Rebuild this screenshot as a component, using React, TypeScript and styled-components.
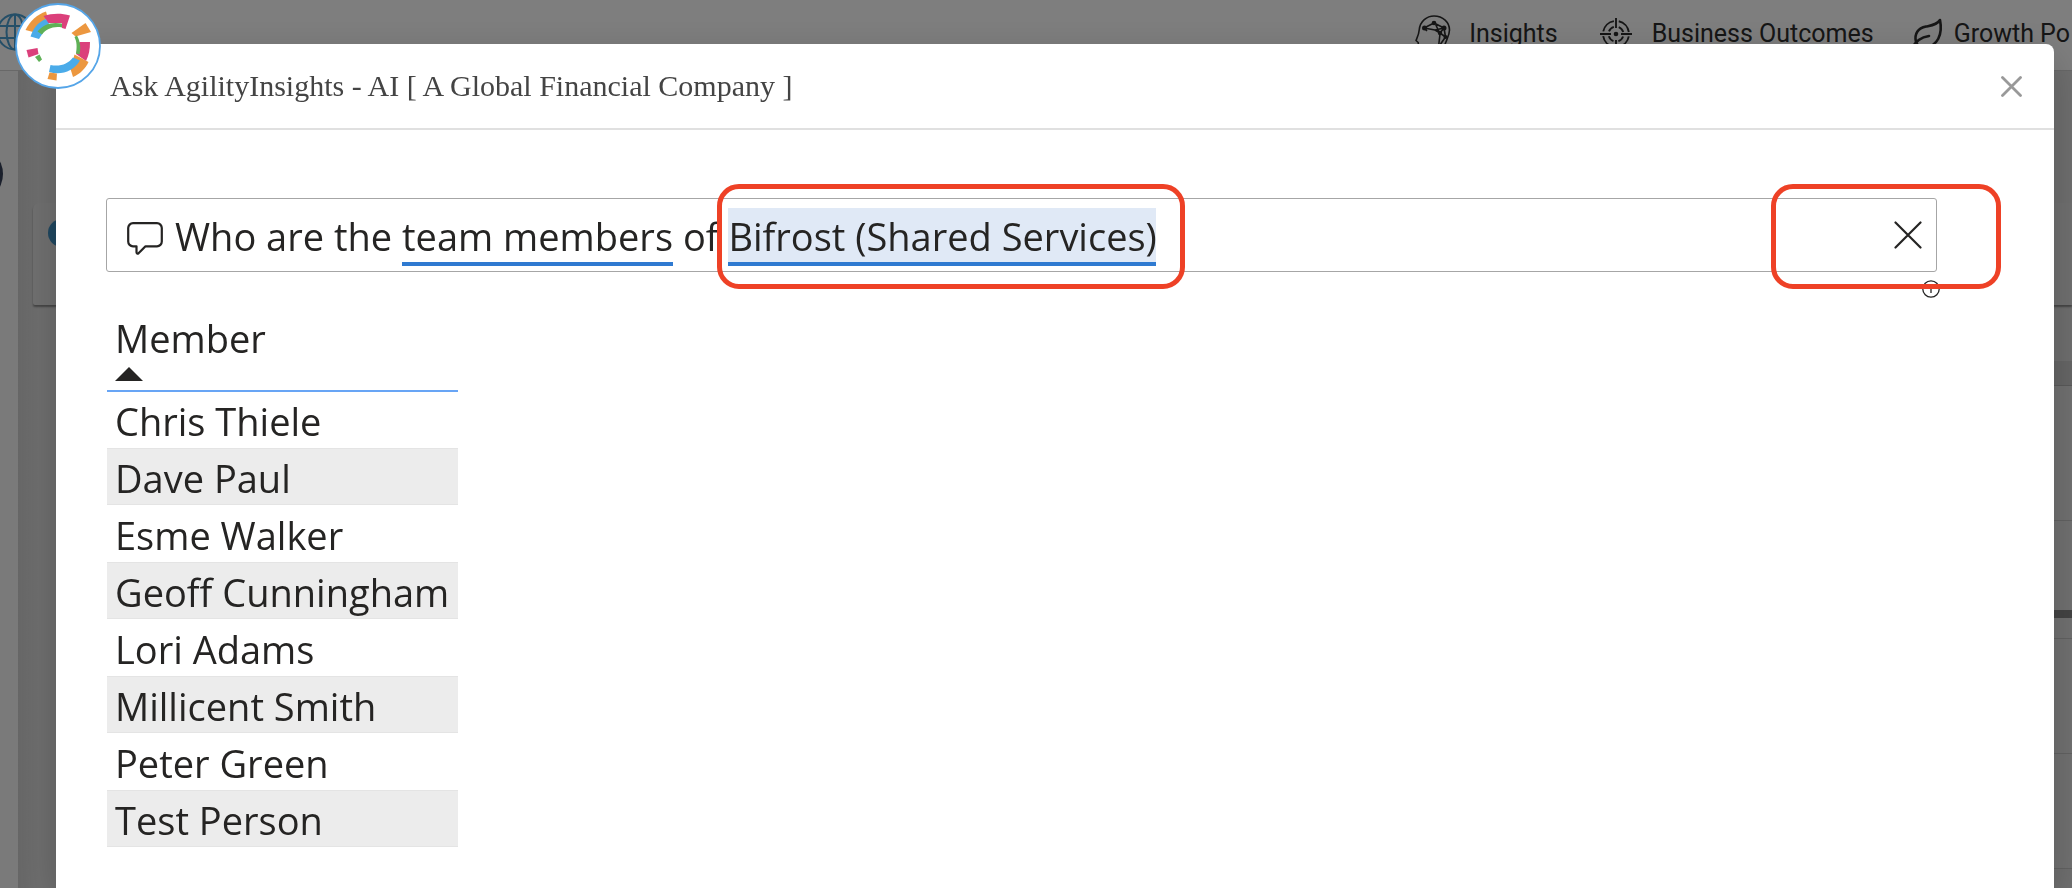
import React, { useLayoutEffect, useRef, useState } from "react";
import styled, { createGlobalStyle } from "styled-components";

const uiFont = `"Segoe UI", "Open Sans", "Noto Sans", sans-serif`;
const serifFont = `"Liberation Serif", "Times New Roman", serif`;
const ink = "#252423";

const GlobalStyle = createGlobalStyle`
  *, *::before, *::after { box-sizing: border-box; }
  html, body { margin: 0; padding: 0; }
  body { overflow: hidden; background: #dcdcdc; font-family: ${uiFont}; }
  button, input { font: inherit; }
`;

/* ---------- page behind the dialog ---------- */

const Page = styled.div`
  display: flex;
  flex-direction: column;
  height: 100vh;
  overflow: hidden;
`;

const TopBar = styled.header`
  display: flex;
  flex: none;
  align-items: flex-start;
  justify-content: space-between;
  height: 71px;
  padding-right: 2px;
  background: #fcfcfc;
  border-bottom: 1px solid #d0d0d0;
`;

const GlobeLink = styled.a`
  display: flex;
  margin: 13px 0 0 -4px;
  color: #4a9ed0;
`;

const Nav = styled.nav`
  display: flex;
  margin-top: 14px;
`;

const NavLink = styled.a<{ $gap: number; $before?: number }>`
  display: flex;
  align-items: center;
  gap: ${(p) => p.$gap}px;
  height: 40px;
  margin-left: ${(p) => p.$before ?? 0}px;
  color: #2c2c2c;
  font: 25px/40px Roboto, sans-serif;
  text-decoration: none;
  white-space: nowrap;

  svg { flex: none; }
`;

const NavText = styled.span`
  height: 40px;
  line-height: 40px;
`;

const Body = styled.div`
  display: flex;
  flex: 1;
  min-height: 0;
`;

const Sidebar = styled.aside`
  flex: none;
  width: 18px;
  overflow: hidden;
  background: #f5f5f5;
`;

const Avatar = styled.div`
  width: 56px;
  height: 56px;
  margin: 75px 0 0 -53px;
  border-radius: 50%;
  background: #364058;
`;

const Content = styled.main`
  flex: 1;
  min-width: 0;
  padding: 132px 0 0 15px;
  background: linear-gradient(90deg, #cdcdcd, #dddddd 20px);
`;

const SummaryCard = styled.section`
  height: 102px;
  padding: 16px 15px;
  border-radius: 6px 0 0 2px;
  background: #e0e0e0;
  box-shadow: 0 2px 2px #8a8a8a;
`;

const Bullet = styled.div`
  width: 28px;
  height: 28px;
  border-radius: 50%;
  background: #3f8fc0;
`;

const Panel = styled.section`
  margin: 56px 0 0 80px;
  background: #e2e2e2;
`;

const PanelRow = styled.div<{ $height: number; $tone?: string; $line?: string }>`
  height: ${(p) => p.$height}px;
  background: ${(p) => p.$tone ?? "transparent"};
  border-bottom: 1px solid ${(p) => p.$line ?? "#c4c4c4"};
`;

/* ---------- dialog ---------- */

const Overlay = styled.div`
  position: fixed;
  inset: 0;
  display: flex;
  padding: 44px 18px 0 56px;
  background: rgba(0, 0, 0, 0.5);
`;

const Dialog = styled.section`
  position: relative;
  flex: 1;
  min-width: 0;
  border-radius: 8px 8px 0 0;
  background: #fff;
  box-shadow: 0 12px 40px rgba(0, 0, 0, 0.2);
`;

const LogoBadge = styled.div`
  position: absolute;
  top: -41px;
  left: -41px;
  width: 86px;
  height: 86px;

  svg { display: block; }
`;

const DialogHeader = styled.header`
  display: flex;
  align-items: center;
  justify-content: space-between;
  height: 86px;
  padding: 0 32px 0 54px;
  border-bottom: 2px solid #e0e0e0;
`;

const DialogTitle = styled.h1`
  margin: 0;
  color: #444;
  font: 400 30px/40px ${serifFont};
`;

const IconButton = styled.button`
  display: flex;
  flex: none;
  padding: 0;
  border: 0;
  background: none;
  color: ${ink};
  cursor: pointer;
`;

const CloseButton = styled(IconButton)`
  color: #999;
`;

const DialogBody = styled.div`
  padding: 68px 117px 0 50px;
`;

const AskArea = styled.div`
  position: relative;
`;

const AskBar = styled.form`
  display: flex;
  align-items: center;
  height: 74px;
  padding: 0 14px 0 20px;
  border: 1px solid #a6a6a6;
  border-radius: 3px;
  background: #fff;
`;

const AskLabel = styled.label`
  display: flex;
  flex: none;
  margin-right: 12px;
  padding-top: 8px;
  color: ${ink};
`;

const AskField = styled.div`
  position: relative;
  flex: 1;
  min-width: 0;
  height: 58px;
`;

const AskInput = styled.input`
  position: relative;
  display: block;
  width: 100%;
  height: 58px;
  padding: 2px 0 0;
  border: 0;
  outline: 0;
  background: transparent;
  color: ${ink};
  font: 400 38px/56px ${uiFont};
`;

const TermMark = styled.span<{ $selected?: boolean }>`
  position: absolute;
  top: 2px;
  height: 58px;
  border-bottom: 4px solid #2f7ad1;
  background: ${(p) => (p.$selected ? "#e0e9f6" : "transparent")};
`;

const Info = styled(IconButton)`
  margin: 8px -3px 0 auto;
`;

const Callout = styled.div<{ $left?: number; $right?: number; $width: number }>`
  position: absolute;
  top: -14px;
  left: ${(p) => (p.$left === undefined ? "auto" : `${p.$left}px`)};
  right: ${(p) => (p.$right === undefined ? "auto" : `${p.$right}px`)};
  width: ${(p) => p.$width}px;
  height: 105px;
  border: 5px solid #ee4126;
  border-radius: 22px;
  pointer-events: none;
`;

const MemberTable = styled.table`
  width: 351px;
  margin: 11px 0 0 1px;
  border-collapse: collapse;
  color: ${ink};
  font: 400 38px/54px ${uiFont};
`;

const HeadCell = styled.th`
  height: 82px;
  padding: 2px 8px 0;
  border-bottom: 2px solid #68a5f5;
  font-weight: 400;
  text-align: left;
  vertical-align: top;
`;

const SortButton = styled(IconButton)`
  flex-direction: column;
  align-items: flex-start;
  gap: 2px;
  line-height: 54px;
`;

const Row = styled.tr`
  height: 57px;

  &:nth-child(even) { background: #ececec; }
  &:nth-child(even) td { box-shadow: inset 0 1px #e4e4e4, inset 0 -1px #e4e4e4; }
`;

const Cell = styled.td`
  padding: 2px 8px 0;
  white-space: nowrap;
`;

/* ---------- drawings ---------- */

const Globe = () => (
  <svg width="38" height="38" viewBox="0 0 38 38" fill="none" stroke="currentColor" strokeWidth="2" aria-hidden="true">
    <circle cx="19" cy="19" r="17.5" />
    <ellipse cx="19" cy="19" rx="8.5" ry="17.5" />
    <path d="M19 1.5v35M3 13h32M3 25h32" />
  </svg>
);

const HeadNetwork = () => (
  <svg width="36" height="40" viewBox="0 0 36 40" fill="none" stroke="currentColor" strokeWidth="1.6" strokeLinejoin="round" aria-hidden="true">
    <path d="M5 38v-5H4c-1-1-.5-3-.8-4.500L1 26.500C2.500 23 4 20 4.200 16 5 7 12 2 19 2c9 0 15.500 6.500 15.500 14 0 7-4.500 11-5 17v5" />
    <path d="M9 14l10-5 10 5 1.500 9-7 10 1.500-13-5-11M9 14l11 2 9-2M25 19l5.500 4M20 16l5 3 4-5M9 14l3 3" />
    <g fill="currentColor" stroke="none">
      <circle cx="9.500" cy="14" r="2.500" />
      <circle cx="19" cy="9" r="2.300" />
      <circle cx="29" cy="14" r="2.500" />
      <circle cx="30.500" cy="23" r="2" />
      <circle cx="23.500" cy="33" r="2" />
      <circle cx="25" cy="19" r="2.200" />
    </g>
  </svg>
);

const Target = () => (
  <svg width="32" height="32" viewBox="0 0 32 32" fill="none" stroke="currentColor" strokeWidth="1.900" aria-hidden="true">
    <path d="M16 0v10M16 22v10M0 16h11M21 16h11" />
    <circle cx="16" cy="16" r="13" strokeDasharray="15.400 5" strokeDashoffset="-2.500" />
    <circle cx="16" cy="16" r="7.500" strokeDasharray="6.800 5" strokeDashoffset="-2.500" />
    <circle cx="16" cy="16" r="2.300" fill="currentColor" stroke="none" />
  </svg>
);

const Leaf = () => (
  <svg width="34" height="34" viewBox="0 0 34 34" fill="none" stroke="currentColor" strokeWidth="2.600" strokeLinecap="round" strokeLinejoin="round" aria-hidden="true">
    <path d="M30 3c-3 5-9 5.500-14 6.500C8 11 4 17 6 25c1 4 6 5 10 5 11-1 17-12 14-27z" />
    <path d="M19 19C11 20 5 25 1.500 32" />
  </svg>
);

const Cross = ({ width, height, stroke }: { width: number; height: number; stroke: number }) => (
  <svg width={width} height={height} viewBox={`0 0 ${width} ${height}`} fill="none" stroke="currentColor" strokeWidth={stroke} strokeLinecap="round" aria-hidden="true">
    <path d={`M1.500 1.500L${width - 1.5} ${height - 1.5}M${width - 1.5} 1.500L1.500 ${height - 1.5}`} />
  </svg>
);

const Bubble = () => (
  <svg width="36" height="34" viewBox="0 0 36 34" fill="none" stroke="currentColor" strokeWidth="2.200" strokeLinejoin="round" aria-hidden="true">
    <path d="M6 1.200h24a4.800 4.800 0 0 1 4.800 4.800v13.500a4.800 4.800 0 0 1-4.800 4.800H18.500l-7 7c-1 .8-2 .2-2-1v-6H6a4.800 4.800 0 0 1-4.800-4.800V6A4.800 4.800 0 0 1 6 1.200z" />
  </svg>
);

const InfoGlyph = () => (
  <svg width="18" height="18" viewBox="0 0 18 18" fill="none" stroke="currentColor" strokeWidth="1.300" aria-hidden="true">
    <circle cx="9" cy="9" r="8.200" />
    <path d="M9 8v5M9 5v1.500" />
  </svg>
);

const SortArrow = () => (
  <svg width="28" height="14" viewBox="0 0 28 14" fill="currentColor" aria-hidden="true">
    <path d="M14 0l14 14H0z" />
  </svg>
);

const Logo = () => (
  <svg width="86" height="86" viewBox="0 0 86 86" aria-hidden="true">
    <circle cx="43" cy="43" r="42" fill="#fff" stroke="#55a5e8" strokeWidth="1.800" />
    <path fill="#ec973f" d="M10.500 27C15 18 22 11.500 31 8.500L32.500 14 20 29.500z" />
    <path fill="#4aabe9" d="M15.500 33.500C18 26 22.500 19.500 30.500 16L34.500 19.500 24 36z" />
    <path fill="#db407b" d="M28.500 13C37 10.300 46 10 55 12.500L50.500 26 47 25V20H33.500z" />
    <path fill="#5fb157" d="M22.500 28.500C28 21.500 36 18.500 47 20.500V24.500C38 23 31.500 26 27 31.500z" />
    <path fill="#ec973f" d="M56.500 30L70.500 20 76 29 60.500 33.500z" />
    <path fill="#db407b" d="M64.500 39H75C75 46 74 52 71 58L61 51z" />
    <path fill="#5fb157" d="M59.500 34L62 32.500C65.500 39 66 45 64.500 51.500L61 50.500C62 44 62 39 59.500 34z" />
    <path fill="#ec973f" d="M59.500 51.500L73.500 59C70.500 65.500 65 71 58 74L55.500 66z" />
    <path fill="#4aabe9" d="M35.500 62C45 64 53 61 58 54.500L65 57.500C58.500 68.500 46 72.500 34 69z" />
    <path fill="#ec973f" d="M34.500 69.500L42 70.500 41.500 77.500 32.500 76z" />
    <path fill="#db407b" d="M11.500 47L22.500 45 23.500 51 13.500 54.500z" />
    <path fill="#5fb157" d="M20 54L24.500 51.500 27 56.500 24 59z" />
  </svg>
);

/* ---------- question box with recognised terms ---------- */

type Term = { text: string; selected?: boolean };
type Mark = { left: number; width: number; selected?: boolean };

const terms: Term[] = [
  { text: "team members" },
  { text: "Bifrost (Shared Services)", selected: true },
];

function QuestionBox() {
  const [question, setQuestion] = useState(
    "Who are the team members of Bifrost (Shared Services)"
  );
  const [marks, setMarks] = useState<Mark[]>([]);
  const inputRef = useRef<HTMLInputElement>(null);

  useLayoutEffect(() => {
    const input = inputRef.current;
    const ctx = document.createElement("canvas").getContext("2d");
    if (!input || !ctx) return;
    const css = getComputedStyle(input);
    ctx.font = `${css.fontWeight} ${css.fontSize} ${css.fontFamily}`;
    const found: Mark[] = [];
    for (const term of terms) {
      const at = question.indexOf(term.text);
      if (at < 0) continue;
      found.push({
        left: Math.round(ctx.measureText(question.slice(0, at)).width),
        width: Math.round(ctx.measureText(term.text).width),
        selected: term.selected,
      });
    }
    setMarks(found);
  }, [question]);

  return (
    <AskBar onSubmit={(e) => e.preventDefault()}>
      <AskLabel htmlFor="question" aria-label="Question">
        <Bubble />
      </AskLabel>
      <AskField>
        {marks.map((m) => (
          <TermMark key={m.left} $selected={m.selected} style={{ left: m.left, width: m.width }} />
        ))}
        <AskInput
          ref={inputRef}
          id="question"
          type="text"
          spellCheck={false}
          autoComplete="off"
          value={question}
          onChange={(e) => setQuestion(e.target.value)}
        />
      </AskField>
      <IconButton type="button" aria-label="Clear question" onClick={() => setQuestion("")}>
        <Cross width={28} height={28} stroke={2.2} />
      </IconButton>
    </AskBar>
  );
}

const members = [
  "Chris Thiele",
  "Dave Paul",
  "Esme Walker",
  "Geoff Cunningham",
  "Lori Adams",
  "Millicent Smith",
  "Peter Green",
  "Test Person",
];

export default function App() {
  return (
    <>
      <GlobalStyle />
      <Page>
        <TopBar>
          <GlobeLink href="#" aria-label="Home">
            <Globe />
          </GlobeLink>
          <Nav>
            <NavLink href="#insights" $gap={18}>
              <HeadNetwork />
              <NavText>Insights</NavText>
            </NavLink>
            <NavLink href="#outcomes" $gap={20} $before={42}>
              <Target />
              <NavText>Business Outcomes</NavText>
            </NavLink>
            <NavLink href="#growth" $gap={10} $before={36}>
              <Leaf />
              <NavText>Growth Po</NavText>
            </NavLink>
          </Nav>
        </TopBar>
        <Body>
          <Sidebar>
            <Avatar />
          </Sidebar>
          <Content>
            <SummaryCard>
              <Bullet />
            </SummaryCard>
            <Panel>
              <PanelRow $height={25} $tone="#cccccc" $line="#b4b4b4" />
              <PanelRow $height={135} />
              <PanelRow $height={89} $line="#e2e2e2" />
              <PanelRow $height={8} $tone="#888888" $line="#888888" />
              <PanelRow $height={21} />
              <PanelRow $height={115} />
              <PanelRow $height={115} />
            </Panel>
          </Content>
        </Body>
      </Page>

      <Overlay>
        <Dialog role="dialog" aria-labelledby="dialog-title">
          <DialogHeader>
            <DialogTitle id="dialog-title">
              Ask AgilityInsights - AI [ A Global Financial Company ]
            </DialogTitle>
            <CloseButton type="button" aria-label="Close">
              <Cross width={21} height={21} stroke={2.8} />
            </CloseButton>
          </DialogHeader>
          <DialogBody>
            <AskArea>
              <QuestionBox />
              <Info type="button" aria-label="About this answer">
                <InfoGlyph />
              </Info>
              <Callout $left={611} $width={468} />
              <Callout $right={-64} $width={230} />
            </AskArea>
            <MemberTable>
              <thead>
                <tr>
                  <HeadCell scope="col" aria-sort="ascending">
                    <SortButton type="button">
                      Member
                      <SortArrow />
                    </SortButton>
                  </HeadCell>
                </tr>
              </thead>
              <tbody>
                {members.map((name) => (
                  <Row key={name}>
                    <Cell>{name}</Cell>
                  </Row>
                ))}
              </tbody>
            </MemberTable>
          </DialogBody>
          <LogoBadge>
            <Logo />
          </LogoBadge>
        </Dialog>
      </Overlay>
    </>
  );
}
